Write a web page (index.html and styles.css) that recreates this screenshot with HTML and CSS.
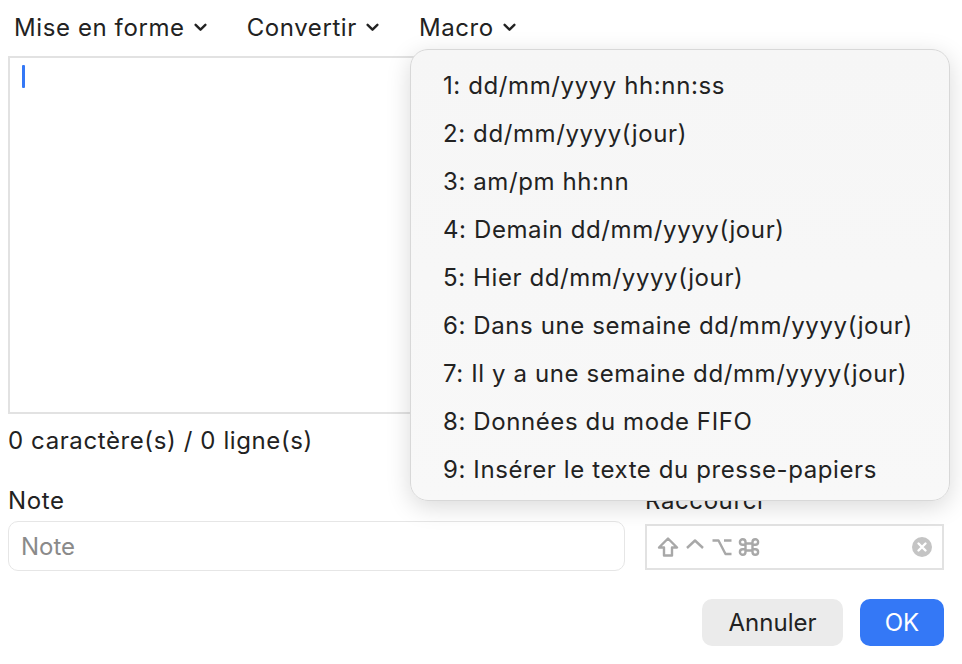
FILE: index.html
```html
<!DOCTYPE html>
<html lang="fr">
<head>
    <meta charset="UTF-8">
    <title>Macro</title>
    <meta name="viewport" content="width=device-width, initial-scale=1.0">
    <link rel="stylesheet" href="styles.css">
</head>
<body>

    <div class="fenetre">
        <nav class="barre">
            <span class="menu-titre">Mise en forme <svg class="chevron" viewBox="0 0 12 8"><path d="M1.5 1.5 L6 6 L10.5 1.5"/></svg></span>
            <span class="menu-titre">Convertir <svg class="chevron" viewBox="0 0 12 8"><path d="M1.5 1.5 L6 6 L10.5 1.5"/></svg></span>
            <span class="menu-titre">Macro <svg class="chevron" viewBox="0 0 12 8"><path d="M1.5 1.5 L6 6 L10.5 1.5"/></svg></span>
        </nav>

        <div class="texte">
            <span class="curseur"></span>
        </div>

        <p class="compteur">0 caractère(s) / 0 ligne(s)</p>

        <div class="champs">
            <div class="champ note">
                <label for="note">Note</label>
                <input type="text" id="note" placeholder="Note">
            </div>
            <div class="champ raccourci">
                <label>Raccourci</label>
                <div class="touches">
                    <span class="symboles">
                        <!-- maj -->
                        <svg viewBox="0 0 22 20"><path d="M11 1.5 L20 10.5 L15 10.5 L15 18.5 L7 18.5 L7 10.5 L2 10.5 Z"/></svg>
                        <!-- ctrl -->
                        <svg viewBox="0 0 22 20"><path d="M3 11 L11 3.5 L19 11"/></svg>
                        <!-- option -->
                        <svg viewBox="0 0 22 20"><path d="M1.5 3.5 L7.5 3.5 L14.5 17 L20.5 17 M13 3.5 L20.5 3.5"/></svg>
                        <!-- cmd -->
                        <svg viewBox="0 0 22 20"><path d="M7.5 6.5 L14.5 6.5 L14.5 13.5 L7.5 13.5 Z M7.5 6.5 L7.5 5 A2.8 2.8 0 1 0 4.7 7.8 L7.5 7.8 M14.5 6.5 L14.5 5 A2.8 2.8 0 1 1 17.3 7.8 L14.5 7.8 M7.5 13.5 L7.5 15 A2.8 2.8 0 1 1 4.7 12.2 L7.5 12.2 M14.5 13.5 L14.5 15 A2.8 2.8 0 1 0 17.3 12.2 L14.5 12.2"/></svg>
                    </span>
                    <svg class="effacer" viewBox="0 0 20 20">
                        <circle cx="10" cy="10" r="10" fill="#c4c4c4"/>
                        <path d="M6.5 6.5 L13.5 13.5 M13.5 6.5 L6.5 13.5" stroke="#fff" stroke-width="2.4" stroke-linecap="round"/>
                    </svg>
                </div>
            </div>
        </div>

        <div class="boutons">
            <button class="bouton annuler">Annuler</button>
            <button class="bouton ok">OK</button>
        </div>

        <!-- menu déroulant ouvert sous "Macro" -->
        <ul class="deroulant">
            <li>1: dd/mm/yyyy hh:nn:ss</li>
            <li>2: dd/mm/yyyy(jour)</li>
            <li>3: am/pm hh:nn</li>
            <li>4: Demain dd/mm/yyyy(jour)</li>
            <li>5: Hier dd/mm/yyyy(jour)</li>
            <li>6: Dans une semaine dd/mm/yyyy(jour)</li>
            <li>7: Il y a une semaine dd/mm/yyyy(jour)</li>
            <li>8: Données du mode FIFO</li>
            <li>9: Insérer le texte du presse-papiers</li>
        </ul>
    </div>

</body>
</html>
```

FILE: styles.css
```css
body {
    margin: 0;
    background-color: white;
    font-family: Inter, "Noto Sans", sans-serif;
    font-size: 24px;
    letter-spacing: 0.6px;
    color: #222;
}

.fenetre {
    position: relative;
    width: 962px;
    height: 664px;
    padding: 0 18px 0 8px;
    box-sizing: border-box;
}

.barre {
    display: flex;
    gap: 40px;
    height: 56px;
    align-items: center;
    padding-left: 6px;
    padding-bottom: 2px;
    box-sizing: border-box;
}

.menu-titre {
    display: flex;
    align-items: center;
    gap: 9px;
}

.chevron {
    width: 13px;
    height: 9px;
    fill: none;
    stroke: #222;
    stroke-width: 2.2;
    stroke-linecap: round;
    stroke-linejoin: round;
}

.texte {
    height: 358px;
    border: 2px solid #e2e2e2;
    box-sizing: border-box;
    padding: 7px 12px;
}

.curseur {
    display: block;
    width: 3px;
    height: 23px;
    background-color: #3478f6;
    border-radius: 1px;
}

.compteur {
    margin: 12px 0 0 0;
    height: 30px;
    line-height: 30px;
}

.champs {
    display: flex;
    gap: 20px;
    margin-top: 30px;
}

.champ label {
    display: block;
    height: 30px;
    line-height: 30px;
}

.note {
    width: 617px;
}

.note input {
    width: 100%;
    height: 50px;
    box-sizing: border-box;
    margin-top: 5px;
    border: 1px solid #e6e6e6;
    border-radius: 10px;
    padding: 0 12px;
    font: inherit;
    color: #222;
    outline: none;
}

.note input::placeholder {
    color: #8a8a8a;
}

.raccourci {
    flex: 1;
}

.touches {
    display: flex;
    align-items: center;
    justify-content: space-between;
    height: 46px;
    margin-top: 8px;
    border: 2px solid #e2e2e2;
    box-sizing: border-box;
    padding: 0 10px 0 10px;
}

.symboles {
    display: flex;
    gap: 5px;
}

.symboles svg {
    width: 22px;
    height: 20px;
    fill: none;
    stroke: #a8a8a8;
    stroke-width: 2.4;
    stroke-linejoin: round;
}

.effacer {
    width: 20px;
    height: 20px;
}

.boutons {
    display: flex;
    justify-content: flex-end;
    gap: 17px;
    margin-top: 28px;
}

.bouton {
    height: 47px;
    border: none;
    border-radius: 10px;
    font: inherit;
    padding: 0;
}

.annuler {
    width: 141px;
    background-color: #ebebeb;
    color: #222;
}

.ok {
    width: 84px;
    background-color: #3478f6;
    color: white;
}

.deroulant {
    position: absolute;
    left: 410px;
    top: 49px;
    width: 540px;
    height: 452px;
    box-sizing: border-box;
    margin: 0;
    padding: 12px 0 8px 32px;
    list-style: none;
    background: linear-gradient(#f6f6f6, #f8f8f8);
    border: 1px solid #d8d8d8;
    border-radius: 18px;
    box-shadow: 0 6px 24px rgba(0, 0, 0, 0.15);
}

.deroulant li {
    height: 48px;
    line-height: 48px;
}
```
